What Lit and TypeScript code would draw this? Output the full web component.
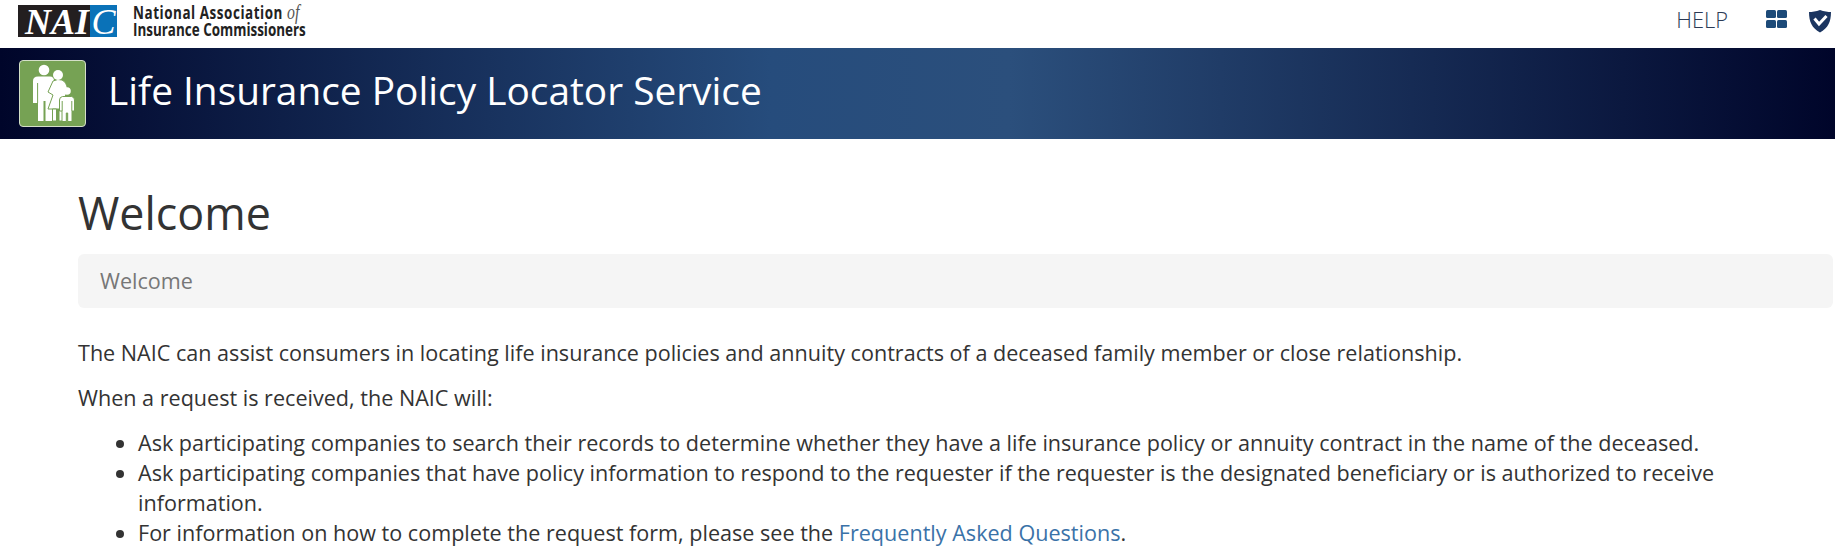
import { LitElement, html, css } from "lit";
import { customElement } from "lit/decorators.js";

@customElement("app-root")
export class AppRoot extends LitElement {
  static styles = css`
    :host { display: block; font-family: "Open Sans", sans-serif; color: #333; background: #fff; overflow: hidden; }
    .top { height: 48px; display: flex; align-items: flex-start; padding-left: 18px; }
    .logo { width: 99px; height: 32px; margin-top: 5px; display: flex; font-family: "Liberation Serif", serif; font-style: italic; font-weight: bold; font-size: 36px; line-height: 34px; color: #fff; }
    .naic { width: 72px; background: #231f20; padding-left: 7px; box-sizing: border-box; white-space: nowrap; }
    .c { width: 27px; background: #0a72b8; text-align: center; font-weight: normal; }
    .org { margin-left: 16px; margin-top: 4px; font-size: 17px; line-height: 16.5px; font-weight: 700; color: #222; width: 225px; transform: scaleX(.79); transform-origin: left center; white-space: nowrap; }
    .line1 { letter-spacing: .7px; }
    .org i { font-family: "Liberation Serif", serif; font-size: 20px; letter-spacing: 0; font-weight: normal; color: #555; }
    .right { margin-left: auto; display: flex; align-items: flex-start; }
    .help { font-size: 21.8px; line-height: 30px; margin-top: 5px; color: #2b3a55; font-weight: 300; margin-right: 38px; }
    .grid { margin-top: 10px; margin-right: 21px; display: block; }
    .shield { margin-top: 9px; margin-right: 3px; display: block; }
    .banner { height: 91px; display: flex; align-items: center; padding-left: 19px; gap: 22px; background: linear-gradient(to right, #00052a 0%, #264c7c 42%, #2b4f7c 55%, #00052a 100%); }
    .tile { width: 67px; height: 67px; box-sizing: border-box; border: 1px solid #d4dfc8; border-radius: 4px; background: #76a254; display: block; flex: none; }
    .title { font-size: 38.85px; line-height: 1; color: #fff; padding-bottom: 6px; }
    main { padding: 44px 0 0 78px; }
    h1 { margin: 0; font-size: 44.8px; line-height: 60px; font-weight: 400; color: #333; }
    .crumb { margin: 11px 2px 0 0; height: 54px; box-sizing: border-box; padding: 0 22px 2px; display: flex; align-items: center; background: #f5f5f5; border-radius: 6px; color: #777; font-size: 21.58px; }
    p { margin: 0 0 15px; font-size: 21.58px; line-height: 30px; }
    .crumb + p { margin-top: 30px; }
    ul { margin: 0; padding: 0 0 0 60px; font-size: 21.58px; line-height: 30px; }
    a { color: #3a72a8; text-decoration: none; }
  `;

  render() {
    return html`
      <div class="top">
        <div class="logo"><span class="naic">NAI</span><span class="c">C</span></div>
        <div class="org"><span class="line1">National Association <i>of</i></span><br />Insurance Commissioners</div>
        <div class="right">
          <span class="help">HELP</span>
          <svg class="grid" width="21" height="18" viewBox="0 0 21 18"><g fill="#1c4a78"><rect width="10" height="8" rx="1.5"/><rect x="11" width="10" height="8" rx="1.5"/><rect y="10" width="10" height="8" rx="1.5"/><rect x="11" y="10" width="10" height="8" rx="1.5"/></g></svg>
          <svg class="shield" width="24" height="24" viewBox="0 0 24 24"><path d="M12 1 C8 2.5 4 3 1 3 C1 13 4 19 12 23.5 C20 19 23 13 23 3 C20 3 16 2.5 12 1Z" fill="#1b3560"/><path d="M6.5 9.5 L11 15 L18.5 7" fill="none" stroke="#fff" stroke-width="3"/></svg>
        </div>
      </div>
      <div class="banner">
        <svg class="tile" viewBox="0 0 65 65">
          <g fill="#fff" stroke="#76a254" stroke-width="1">
            <circle cx="24" cy="9" r="5.3" stroke="none"/>
            <path stroke="none" d="M13 20 Q13 15.5 18 15.5 L30 15.5 Q34 15.5 34 20 L34 60 L25.5 60 L25.5 40 L23.5 40 L23.5 60 L18 60 L18 42 L13 42Z"/>
            <path fill="none" d="M17.6 22 L17.6 42"/>
            <path d="M33 20 Q38 17.5 42 19 Q46.5 21 47.5 28 L45 36 L45 48 L28 48 L33 34 L28 31Z"/>
            <path d="M32.5 48 L36.5 48 L36.5 60 L32.5 60Z M39 48 L43 48 L43 60 L39 60Z"/>
            <circle cx="38" cy="14" r="5" stroke="none"/>
            <circle cx="47" cy="30" r="3.8" stroke="none"/>
            <path d="M42.5 35.5 L51.5 35.5 Q54.5 36 54.5 39 L54.5 50 L52 50 L52 60.5 L47.7 60.5 L47.7 52 L46.3 52 L46.3 60.5 L42 60.5 L42 50 L39.5 50 L39.5 39 Q39.5 36 42.5 35.5Z"/>
            <path fill="none" d="M42.2 40 L42.2 50 M51.8 40 L51.8 50"/>
          </g>
        </svg>
        <span class="title">Life Insurance Policy Locator Service</span>
      </div>
      <main>
        <h1>Welcome</h1>
        <div class="crumb">Welcome</div>
        <p>The NAIC can assist consumers in locating life insurance policies and annuity contracts of a deceased family member or close relationship.</p>
        <p>When a request is received, the NAIC will:</p>
        <ul>
          <li>Ask participating companies to search their records to determine whether they have a life insurance policy or annuity contract in the name of the deceased.</li>
          <li>Ask participating companies that have policy information to respond to the requester if the requester is the designated beneficiary or is authorized to receive information.</li>
          <li>For information on how to complete the request form, please see the <a href="#">Frequently Asked Questions</a>.</li>
        </ul>
      </main>
    `;
  }
}
